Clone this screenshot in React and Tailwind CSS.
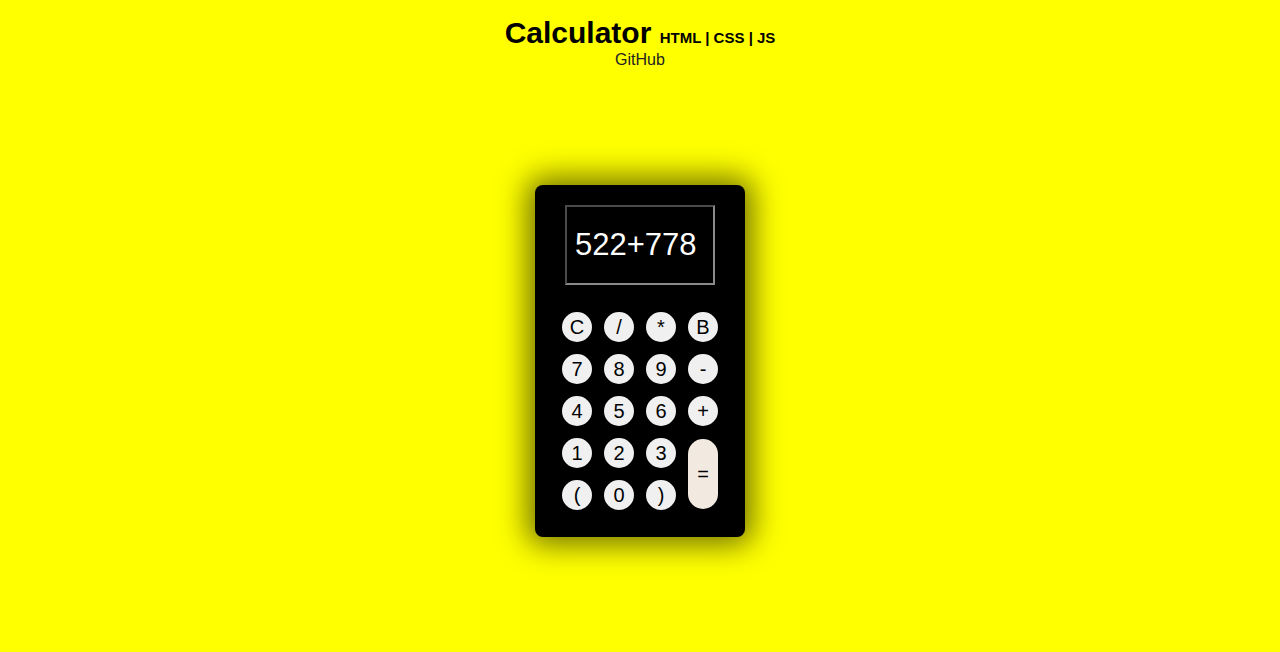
import React from "react";

const keys = ["C", "/", "*", "B", "7", "8", "9", "-", "4", "5", "6", "+", "1", "2", "3"];
const lastRow = ["(", "0", ")"];

const Key = ({ label }) => (
  <button className="w-[30px] h-[30px] rounded-full bg-[#f0f0f0] text-black text-[20px] leading-none flex items-center justify-center">
    {label}
  </button>
);

export default function App() {
  return (
    <div className="min-h-[652px] w-full bg-[#ffff00] flex flex-col items-center font-['Liberation_Sans',Arial,sans-serif] text-black">
      <h1 className="mt-[15px] text-[30px] font-bold leading-[36px]">
        Calculator <span className="text-[15px] leading-none">HTML | CSS | JS</span>
      </h1>
      <a className="text-[16px] leading-[18px] text-[#222]">GitHub</a>

      <div className="mt-[116px] w-[210px] h-[352px] bg-black rounded-[8px] shadow-[0_0_30px_8px_rgba(0,0,0,0.55)] flex flex-col items-center pt-[20px]">
        <div className="w-[150px] h-[80px] border-2 border-t-[#4a4a4a] border-l-[#4a4a4a] border-b-[#8a8a8a] border-r-[#8a8a8a] flex items-center pl-[8px] text-white text-[31px]">
          522+778
        </div>
        <div className="mt-[27px] grid grid-cols-[repeat(4,30px)] gap-[12px]">
          {keys.map((k, i) => (
            <React.Fragment key={i}>
              <Key label={k} />
              {k === "3" && (
                <button className="row-span-2 self-center w-[30px] h-[70px] rounded-full bg-[#f2eae1] text-black text-[20px] flex items-center justify-center">
                  =
                </button>
              )}
            </React.Fragment>
          ))}
          {lastRow.map((k) => (
            <Key key={k} label={k} />
          ))}
        </div>
      </div>
    </div>
  );
}
